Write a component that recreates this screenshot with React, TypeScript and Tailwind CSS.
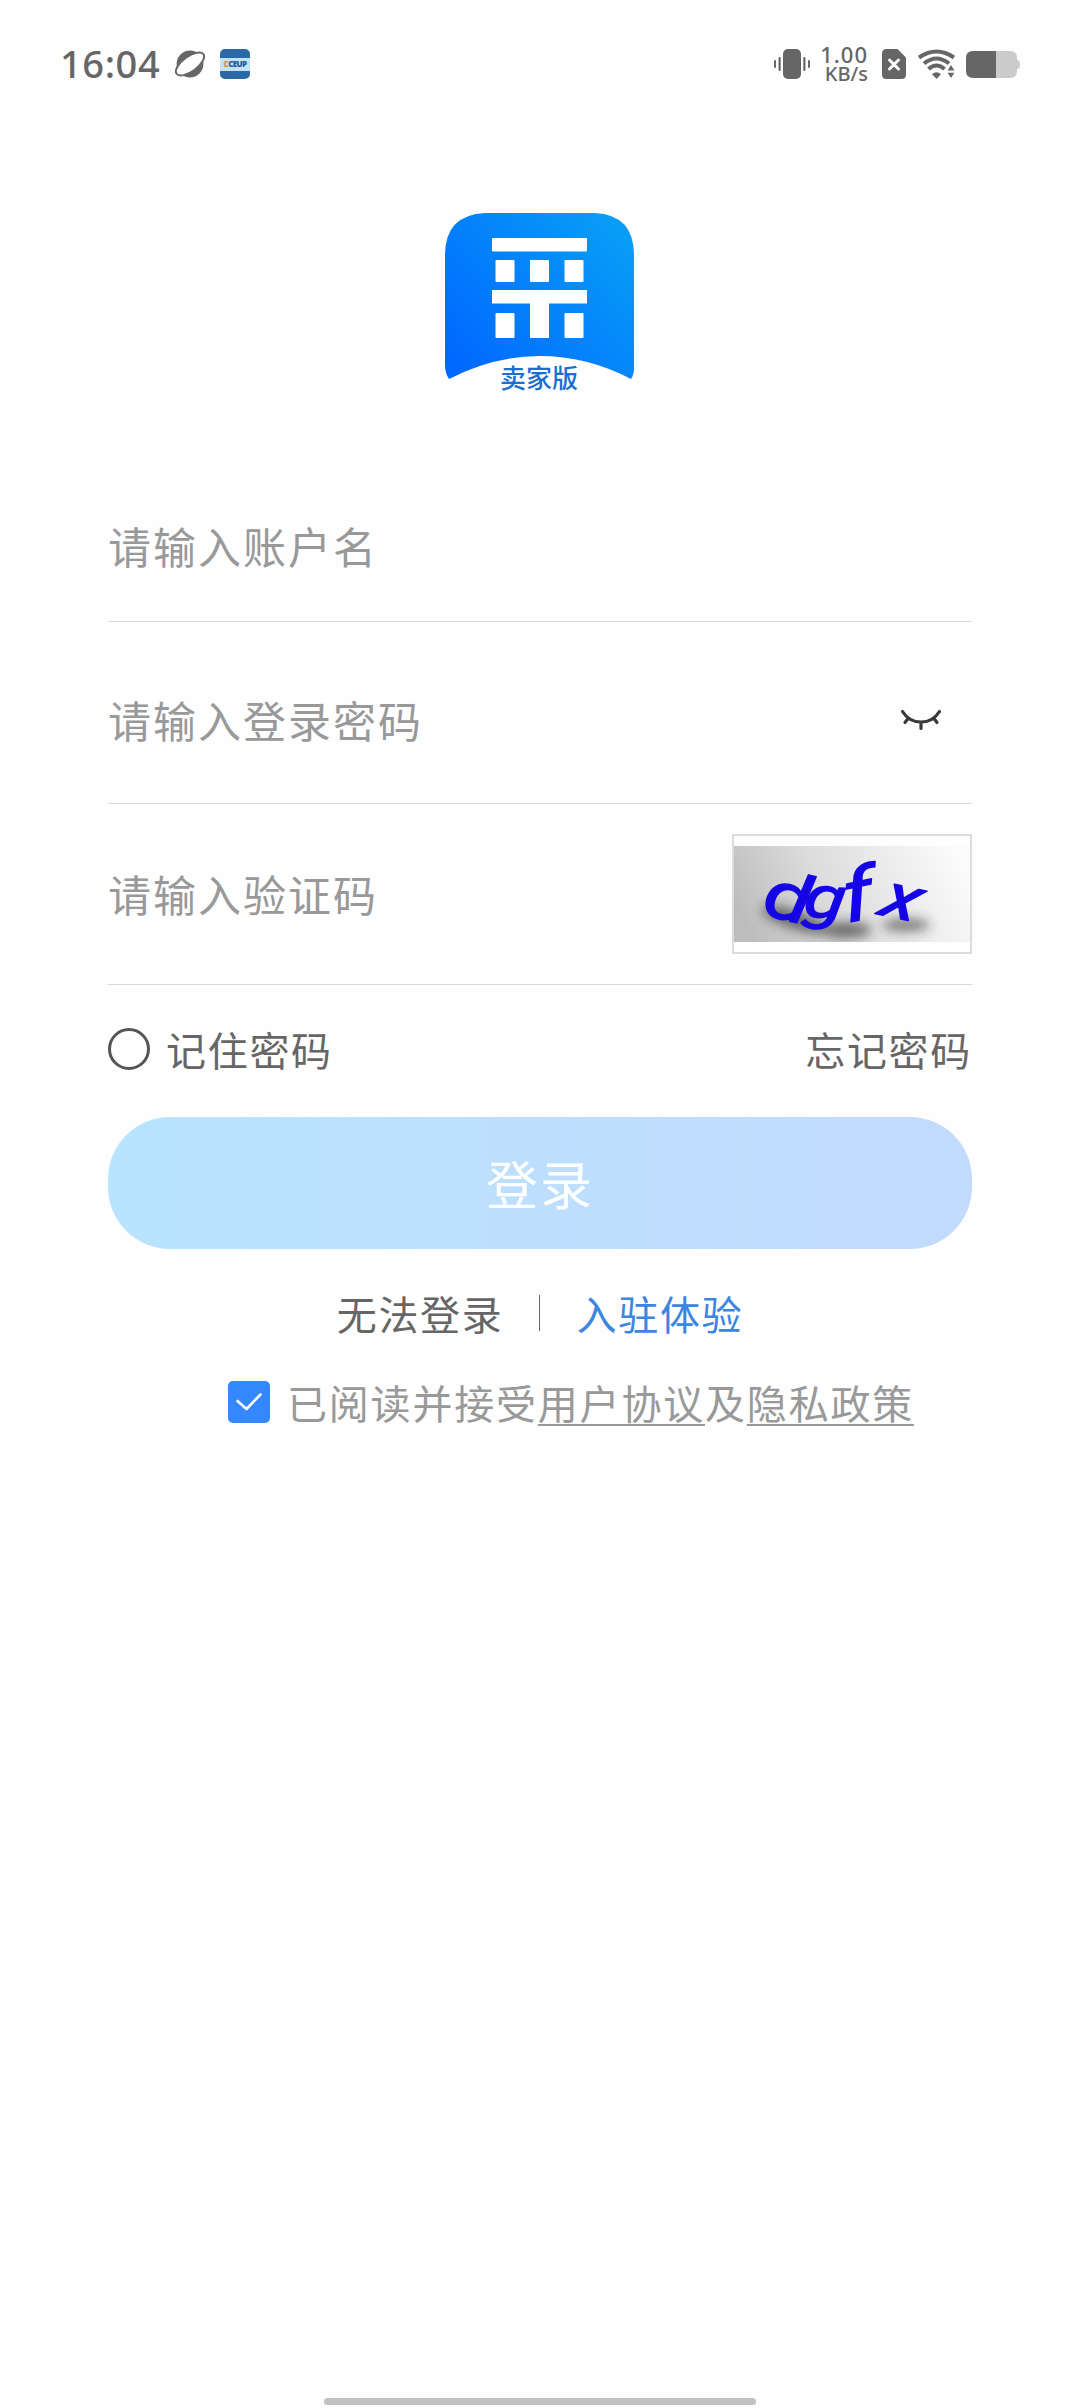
import React, { useState } from "react";

interface FieldProps {
  placeholder: string;
  type?: string;
  className: string;
  children?: React.ReactNode;
}

const VibrateIcon = () => (
  <svg width="36" height="30" viewBox="0 0 36 30" fill="#666">
    <rect x="9" y="0" width="18" height="30" rx="5" />
    <rect x="0" y="11" width="2" height="8" rx="1" />
    <rect x="4.5" y="8" width="2.2" height="14" rx="1" />
    <rect x="29.3" y="8" width="2.2" height="14" rx="1" />
    <rect x="34" y="11" width="2" height="8" rx="1" />
  </svg>
);

const PlanetIcon = () => (
  <svg width="32" height="30" viewBox="0 0 32 30">
    <circle cx="16" cy="15" r="13.4" fill="#666" />
    <ellipse
      cx="16"
      cy="15"
      rx="16.6"
      ry="7.4"
      fill="#fefefe"
      stroke="#666"
      strokeWidth="2"
      transform="rotate(-36 16 15)"
    />
  </svg>
);

const SimIcon = () => (
  <svg width="24" height="30" viewBox="0 0 24 30">
    <path
      d="M4.5 0H15.5L24 8.5V25.5Q24 30 19.5 30H4.5Q0 30 0 25.5V4.5Q0 0 4.5 0Z"
      fill="#666"
    />
    <path
      d="M7.5 11L16.5 20M16.5 11L7.5 20"
      stroke="#fefefe"
      strokeWidth="3"
      strokeLinecap="round"
    />
  </svg>
);

const WifiIcon = () => (
  <svg width="38" height="30" viewBox="0 0 38 30" fill="none">
    <path d="M1 8.5Q18.5 -3.5 36 8.5" stroke="#666" strokeWidth="4" />
    <path d="M6 14.5Q18.5 4.5 31 14.5" stroke="#666" strokeWidth="4" />
    <path d="M10.5 20Q18.5 13 26.5 20" stroke="#666" strokeWidth="4" />
    <path d="M14 25.2Q18.5 21.5 23 25.2L18.5 30Z" fill="#666" />
    <path d="M33 16L36.4 21.4H29.6ZM33 29L36.4 23.8H29.6Z" fill="#666" />
  </svg>
);

const BatteryIcon = () => (
  <svg width="54" height="27" viewBox="0 0 54 27">
    <path d="M30 0H44Q51 0 51 7V20Q51 27 44 27H30Z" fill="#cbcbcb" />
    <path d="M51 9Q54 9 54 13.5Q54 18 51 18Z" fill="#cbcbcb" />
    <path d="M7 0H30V27H7Q0 27 0 20V7Q0 0 7 0Z" fill="#666" />
  </svg>
);

const StatusBar = () => (
  <header className="flex h-32 items-center justify-between px-[60px]">
    <div className="flex items-center">
      <span className="w-[114px] pb-[2px] font-['Noto_Sans'] text-[38px] leading-none font-medium tracking-[0.6px] text-[#666]">
        16:04
      </span>
      <PlanetIcon />
      <div className="ml-[14px] flex h-[30px] w-[30px] items-center overflow-hidden rounded-[5px] bg-[#2a68a6]">
        <div className="flex h-[13px] w-full items-center justify-center bg-[#c3e2f4] font-['Noto_Sans'] text-[8px] font-black tracking-[-0.6px] text-[#1f5a98]">
          <span className="text-[#e58a35]">C</span>CEUP
        </div>
      </div>
    </div>
    <div className="flex items-center">
      <VibrateIcon />
      <div className="ml-[11px] flex w-[47px] flex-col items-end font-['Noto_Sans'] font-medium text-[#666]">
        <span className="text-[22px] leading-[19px] tracking-[1px]">1.00</span>
        <span className="text-[20px] leading-[19px]">KB/s</span>
      </div>
      <div className="ml-[14px]">
        <SimIcon />
      </div>
      <div className="ml-3">
        <WifiIcon />
      </div>
      <div className="ml-[10px]">
        <BatteryIcon />
      </div>
    </div>
  </header>
);

const Logo = () => (
  <svg width="190" height="184" viewBox="0 0 190 184">
    <defs>
      <linearGradient id="logoFill" x1="0" y1="0.85" x2="0.95" y2="0.1">
        <stop offset="0" stopColor="#0068ff" />
        <stop offset="1" stopColor="#089ef6" />
      </linearGradient>
    </defs>
    <path
      d="M40 0H150Q189 2 189 42V155Q189 162 186 166Q142 143 95 143Q48 143 4 166Q0 160 0 152V42Q0 2 40 0Z"
      fill="url(#logoFill)"
    />
    <g fill="#fff">
      <rect x="47" y="25" width="95" height="13.5" rx="1" />
      <rect x="50.5" y="47" width="19" height="22" rx="1" />
      <rect x="85" y="47" width="19" height="22" rx="1" />
      <rect x="119.5" y="47" width="19" height="22" rx="1" />
      <path d="M47 77H142V90.5H104V125H85V90.5H47Z" />
      <rect x="50.5" y="100" width="19" height="25" rx="1" />
      <rect x="119.5" y="100" width="19" height="25" rx="1" />
    </g>
    <text
      x="94"
      y="175"
      textAnchor="middle"
      fontSize="26"
      fontWeight="500"
      fill="#1a6fd0"
      className="font-['Noto_Sans_CJK_SC',sans-serif]"
    >
      卖家版
    </text>
  </svg>
);

const ClosedEyeIcon = () => (
  <svg width="42" height="22" viewBox="0 0 42 22" fill="none">
    <path
      d="M2.5 2.5Q9 13 21 13Q33 13 39.5 2.5M8 9.5L5 13.5M34 9.5L37 13.5M21 13V19.5"
      stroke="#3a3a3a"
      strokeWidth="3.2"
      strokeLinecap="round"
    />
  </svg>
);

const Captcha = () => {
  const letters = [
    { char: "d", move: "translate(27 68) rotate(14) skewX(4) scale(1.3 1)", size: 66 },
    { char: "g", move: "translate(68 70) rotate(4) skewX(-4) scale(1.3 1)", size: 58 },
    { char: "f", move: "translate(112 77) rotate(-12) skewX(-4) scale(1.25 1)", size: 72 },
    { char: "x", move: "translate(143 68) rotate(12) skewX(-10) scale(1.25 1)", size: 62 },
  ];

  return (
    <div className="h-[120px] w-[240px] border-2 border-[#dcdcdc] py-[10px]">
      <svg
        width="236"
        height="96"
        viewBox="0 0 236 96"
        className="overflow-visible"
      >
        <defs>
          <linearGradient id="captchaFill" x1="0" y1="0.6" x2="1" y2="0.4">
            <stop offset="0" stopColor="#bdbdbd" />
            <stop offset="0.4" stopColor="#dcdcdc" />
            <stop offset="1" stopColor="#fbfbfb" />
          </linearGradient>
          <filter id="captchaShadow" x="-20%" y="-20%" width="140%" height="140%">
            <feGaussianBlur stdDeviation="6" />
          </filter>
          <clipPath id="captchaClip">
            <rect width="236" height="96" />
          </clipPath>
        </defs>
        <rect width="236" height="96" fill="url(#captchaFill)" />
        <g clipPath="url(#captchaClip)">
          <g opacity="0.6" filter="url(#captchaShadow)" fill="#222">
            <ellipse cx="62" cy="74" rx="36" ry="9" transform="rotate(18 62 74)" />
            <ellipse cx="112" cy="84" rx="26" ry="8" />
            <ellipse cx="172" cy="79" rx="24" ry="6" />
          </g>
        </g>
        <g
          fill="#1505e6"
          stroke="#1505e6"
          strokeWidth="1.4"
          strokeLinejoin="round"
          className="font-['Roboto',sans-serif] italic"
        >
          {letters.map((letter) => (
            <text key={letter.char} transform={letter.move} fontSize={letter.size}>
              {letter.char}
            </text>
          ))}
        </g>
      </svg>
    </div>
  );
};

const Field: React.FC<FieldProps> = ({
  placeholder,
  type = "text",
  className,
  children,
}: FieldProps) => (
  <div
    className={`flex items-center justify-between border-b border-[#d8d8d8] ${className}`}
  >
    <input
      type={type}
      placeholder={placeholder}
      className="mb-[2px] h-16 w-[500px] bg-transparent text-[43px] tracking-[2px] text-[#333] outline-none placeholder:text-[#999]"
    />
    {children}
  </div>
);

const App = () => {
  const [remember, setRemember] = useState(false);
  const [agreed, setAgreed] = useState(true);

  return (
    <div className="flex h-[2408px] w-[1080px] flex-col bg-[#fefefe] font-['Noto_Sans_CJK_SC',sans-serif]">
      <StatusBar />
      <main className="flex flex-1 flex-col px-[108px]">
        <div className="mt-[85px] flex h-[184px] justify-center">
          <Logo />
        </div>

        <div className="mt-[74px]">
          <Field placeholder="请输入账户名" className="h-[151px]" />
          <Field
            placeholder="请输入登录密码"
            type="password"
            className="h-[182px] pt-[15px]"
          >
            <button className="mr-[30px]">
              <ClosedEyeIcon />
            </button>
          </Field>
          <Field placeholder="请输入验证码" className="h-[181px]">
            <Captcha />
          </Field>
        </div>

        <div className="mt-[34px] flex h-[60px] items-center justify-between text-[40px] tracking-[1.7px] text-[#666]">
          <button
            className="flex items-center"
            onClick={() => setRemember(!remember)}
          >
            <span
              className={`h-[42px] w-[42px] rounded-full border-3 border-[#555] ${
                remember ? "bg-[#3388ff]" : ""
              }`}
            />
            <span className="ml-4">记住密码</span>
          </button>
          <button>忘记密码</button>
        </div>

        <button className="mt-[38px] flex h-[132px] items-center justify-center rounded-[62px] bg-linear-to-r from-[#b8e4ff] to-[#c2dafe] text-[52px] tracking-[2px] text-white">
          登录
        </button>

        <div className="mt-[34px] flex h-[60px] items-center justify-center text-[40px] tracking-[1.7px]">
          <button className="text-[#666]">无法登录</button>
          <span className="mr-[37px] ml-[35px] h-9 w-px bg-[#666]" />
          <button className="text-[#3a86e0]">入驻体验</button>
        </div>

        <div className="mt-[29px] ml-[120px] flex h-[60px] items-center text-[40px] tracking-[1.8px] text-[#999]">
          <button
            onClick={() => setAgreed(!agreed)}
            className={`flex h-[42px] w-[42px] items-center justify-center rounded-[5px] ${
              agreed ? "bg-[#3388ff]" : "border-2 border-[#999]"
            }`}
          >
            <svg width="28" height="20" viewBox="0 0 28 20" fill="none">
              <path
                d="M2.5 9L11.5 17L25.5 2.5"
                stroke="#fff"
                strokeWidth="2.6"
                strokeLinecap="round"
                strokeLinejoin="round"
              />
            </svg>
          </button>
          <p className="ml-[17px] whitespace-nowrap">
            已阅读并接受
            <a className="underline decoration-2 underline-offset-[5px] [text-decoration-skip-ink:none]">
              用户协议
            </a>
            及
            <a className="underline decoration-2 underline-offset-[5px] [text-decoration-skip-ink:none]">
              隐私政策
            </a>
          </p>
        </div>
      </main>
      <footer className="flex justify-center pb-[3px]">
        <div className="h-[7px] w-[432px] rounded-full bg-[#c2c2c2]" />
      </footer>
    </div>
  );
};

export default App;
